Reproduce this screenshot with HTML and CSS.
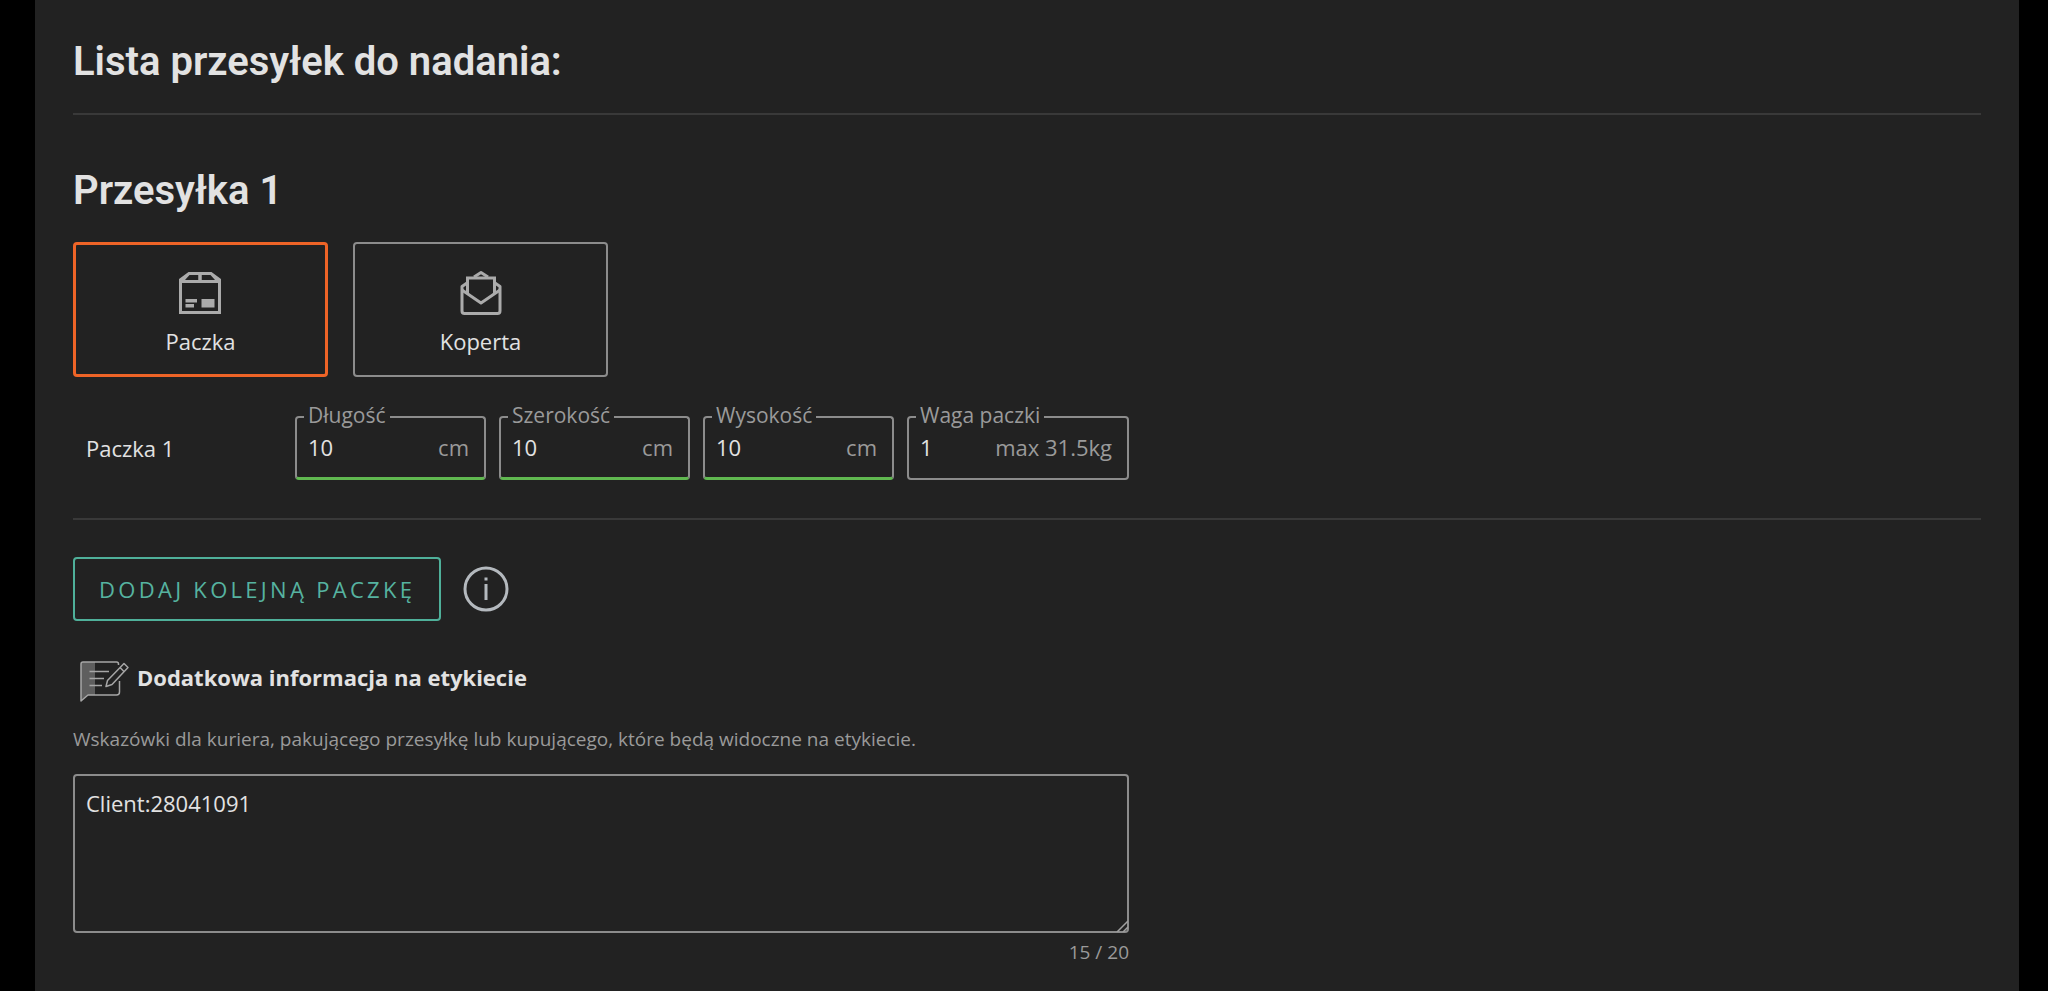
FILE: index.html
```html
<!DOCTYPE html>
<html lang="pl">
<head>
<meta charset="utf-8">
<meta name="viewport" content="width=device-width, initial-scale=1">
<title>Lista przesyłek do nadania</title>
<link rel="stylesheet" href="styles.css">
</head>
<body>
<main class="panel">
  <h1 class="title title-list">Lista przesyłek do nadania:</h1>
  <section class="shipment">
    <h2 class="title title-shipment">Przesyłka 1</h2>
    <div class="types">
      <button class="type type-selected" type="button" aria-pressed="true">
        <svg class="type-icon" viewBox="1 0 42 46" aria-hidden="true">
          <g fill="none" stroke="#ababab" stroke-width="3">
            <path d="M1.500 11.500H40.500V42.500H1.500Z"/>
            <path d="M21 3.500V11.500"/>
          </g>
          <path fill-rule="evenodd" d="M0 13V9L9.500 2H32.500L42 9V13ZM6 10H36L31.500 5H10.500Z" fill="#ababab"/>
          <path d="M19.500 4H22.500V12H19.500ZM6.500 29H18V32.500H6.500ZM6.500 34H15V37.500H6.500ZM22.500 29H35.500V37.500H22.500Z" fill="#ababab"/>
        </svg>
        <span>Paczka</span>
      </button>
      <button class="type" type="button" aria-pressed="false">
        <svg class="type-icon" viewBox="0 0 42 46" aria-hidden="true">
          <g fill="none" stroke="#ababab" stroke-width="3" stroke-linejoin="round">
            <path d="M7 13L2 16.500V41Q2 43.500 4.500 43.500H37.500Q40 43.500 40 41V16.500L35 13"/>
            <path d="M2 20L21 33L40 20"/>
            <path d="M7.500 24V8H34.500V24" stroke-linejoin="miter"/>
            <path d="M14 7L21 2.500L28 7"/>
          </g>
        </svg>
        <span>Koperta</span>
      </button>
    </div>
    <div class="parcel">
      <span class="parcel-name">Paczka 1</span>
      <div class="fields">
        <fieldset class="field field-valid">
          <legend class="field-legend"><label for="length">Długość</label></legend>
          <input class="field-input" id="length" type="text" inputmode="numeric" value="10"><span class="unit">cm</span>
        </fieldset>
        <fieldset class="field field-valid">
          <legend class="field-legend"><label for="width">Szerokość</label></legend>
          <input class="field-input" id="width" type="text" inputmode="numeric" value="10"><span class="unit">cm</span>
        </fieldset>
        <fieldset class="field field-valid">
          <legend class="field-legend"><label for="height">Wysokość</label></legend>
          <input class="field-input" id="height" type="text" inputmode="numeric" value="10"><span class="unit">cm</span>
        </fieldset>
        <fieldset class="field field-weight">
          <legend class="field-legend"><label for="weight">Waga paczki</label></legend>
          <input class="field-input" id="weight" type="text" inputmode="decimal" value="1"><span class="unit">max 31.5kg</span>
        </fieldset>
      </div>
    </div>
  </section>
  <div class="actions">
    <button class="add" type="button">DODAJ KOLEJNĄ PACZKĘ</button>
    <button class="info" type="button" aria-label="Informacja">
      <svg class="info-icon" viewBox="0 0 46 46" aria-hidden="true">
        <circle cx="23" cy="23" r="21" fill="none" stroke="#b4b9be" stroke-width="3"/>
        <path d="M21.500 11.500H24.500V14.500H21.500ZM21.500 18H24.500V34H21.500Z" fill="#b4b9be"/>
      </svg>
    </button>
  </div>
  <section class="note">
    <h3 class="note-title">
      <svg class="note-icon" viewBox="0 0 50 42" aria-hidden="true">
        <path d="M1 3Q1 1 3 1H15V34H8L1 40Z" fill="#5e5e5e"/>
        <g fill="none" stroke="#a6a6a6" stroke-width="1.500" stroke-linejoin="round">
          <path d="M38.500 4V3Q38.500 1 36.500 1H3Q1 1 1 3V40L8 34H36.500Q39.500 34 39.500 31V20"/>
          <path d="M9.500 10.500H29M9.500 17.500H24M9.500 24.500H22"/>
          <path d="M44 2.500L48 6.500L32 23.500L26 25.500L27.500 19.500ZM40 6.500L44 10.500"/>
        </g>
      </svg>
      <label for="note">Dodatkowa informacja na etykiecie</label>
    </h3>
    <p class="hint" id="hint">Wskazówki dla kuriera, pakującego przesyłkę lub kupującego, które będą widoczne na etykiecie.</p>
    <div class="note-box">
      <textarea class="note-text" id="note" aria-describedby="hint" maxlength="20" spellcheck="false">Client:28041091</textarea>
      <svg class="grip" viewBox="0 0 12 12" aria-hidden="true"><path d="M1 12L12 1M7 12L12 7" stroke="#a0a0a0" stroke-width="1.500"/></svg>
    </div>
    <div class="counter">15 / 20</div>
  </section>
</main>
</body>
</html>
```
FILE: styles.css
```css
* {
  box-sizing: border-box;
}

body {
  margin: 0;
  background: #000;
  color: #e2e2e2;
  font: 22px/32px "Open Sans", "Noto Sans", sans-serif;
}

button,
input,
textarea {
  margin: 0;
  color: inherit;
  font: inherit;
}

button {
  cursor: pointer;
}

.panel {
  min-height: 100vh;
  margin: 0 29px 0 35px;
  padding: 37px 38px 20px;
  background: #222;
}

.title {
  margin: 0;
  font: 600 40px/50px Roboto, sans-serif;
}

.title-list {
  padding-bottom: 26px;
  border-bottom: 2px solid #393939;
}

.shipment {
  padding: 51px 0 38px;
  border-bottom: 2px solid #393939;
}

.types {
  display: flex;
  gap: 25px;
  margin-top: 26px;
}

.type {
  display: flex;
  flex-direction: column;
  align-items: center;
  gap: 9px;
  width: 255px;
  height: 135px;
  padding: 26px 0 0;
  border: 2px solid #8c8c8c;
  border-radius: 4px;
  background: transparent;
}

.type-selected {
  padding-top: 25px;
  border: 3px solid #ee6427;
}

.type-icon {
  overflow: visible;
  width: 42px;
  height: 46px;
}

.parcel {
  display: flex;
  align-items: flex-end;
  margin-top: 24px;
}

.parcel-name {
  width: 222px;
  padding: 0 13px 16px;
}

.fields {
  display: flex;
  gap: 13px;
}

.field {
  display: flex;
  align-items: center;
  width: 191px;
  min-width: 0;
  height: 79px;
  margin: 0;
  padding: 0 15px 17px 7px;
  border: 2px solid #8c8c8c;
  border-radius: 4px;
}

.field-valid {
  border-bottom: 3px solid #60b850;
}

.field-weight {
  width: 222px;
}

.field-legend {
  padding: 0 4px 4px;
  color: #9a9a9a;
  font-size: 21px;
  line-height: 28px;
}

.field-input {
  flex: 1;
  width: 0;
  min-width: 0;
  padding: 0 0 0 4px;
  border: 0;
  outline: 0;
  background: transparent;
}

.unit {
  color: #9a9a9a;
}

.actions {
  display: flex;
  align-items: center;
  gap: 22px;
  margin-top: 37px;
}

.add {
  height: 64px;
  padding: 0 24px;
  border: 2px solid #4fb09a;
  border-radius: 4px;
  background: transparent;
  color: #56b3a0;
  letter-spacing: 0.15em;
}

.info {
  padding: 0;
  border: 0;
  background: transparent;
}

.info-icon {
  display: block;
  width: 46px;
  height: 46px;
}

.note {
  max-width: 1056px;
  margin-top: 40px;
}

.note-title {
  display: flex;
  align-items: flex-start;
  gap: 7px;
  margin: 0;
  padding-left: 7px;
  font-size: 22px;
  font-weight: 700;
}

.note-icon {
  width: 50px;
  height: 42px;
}

.hint {
  margin: 21px 0 20px;
  color: #9a9a9a;
  font-size: 19px;
  line-height: 30px;
}

.note-box {
  position: relative;
}

.note-text {
  display: block;
  width: 100%;
  height: 159px;
  padding: 11px;
  border: 2px solid #8c8c8c;
  border-radius: 4px;
  outline: 0;
  background: transparent;
  resize: none;
}

.grip {
  position: absolute;
  right: 1px;
  bottom: 1px;
  width: 12px;
  height: 12px;
}

.counter {
  margin-top: 4px;
  color: #9a9a9a;
  font-size: 19px;
  line-height: 30px;
  text-align: right;
}
```
